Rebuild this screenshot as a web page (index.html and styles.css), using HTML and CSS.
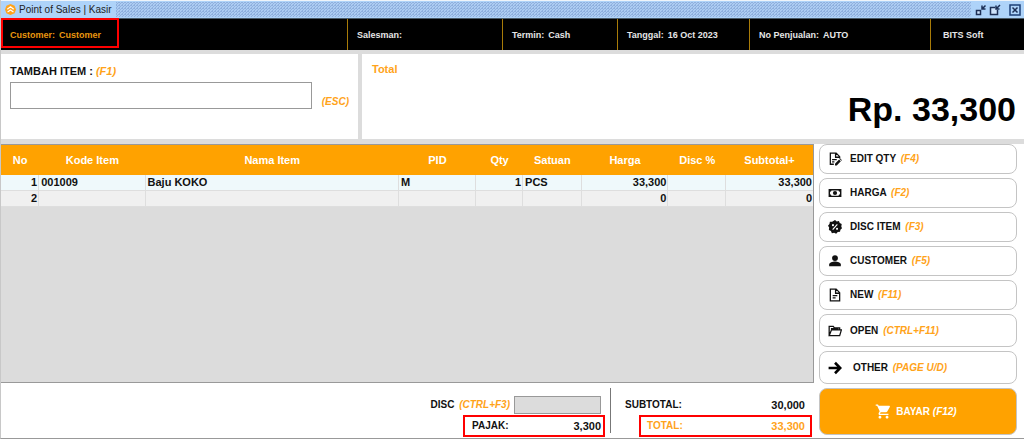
FILE: index.html
```html
<!DOCTYPE html>
<html lang="id">
<head>
<meta charset="utf-8">
<meta name="viewport" content="width=device-width, initial-scale=1">
<title>Point of Sales | Kasir</title>
<link rel="stylesheet" href="styles.css">
</head>
<body>
<div class="app">
  <header class="titlebar">
    <svg class="logo" viewBox="0 0 12 12" aria-hidden="true"><path d="M6 0l4.5 1.800L12 6l-1.500 4.200L6 12l-4.500-1.800L0 6l1.500-4.200z" fill="#ffa31a"/><path d="M2.500 5.800L6 3l3.500 2.800M2.800 8.800L6 6.500l3.200 2.300" fill="none" stroke="#fff" stroke-width="1.300"/></svg>
    <h1 class="title">Point of Sales | Kasir</h1>
    <div class="grip"></div>
    <div class="window-buttons">
      <button class="win" aria-label="Minimize"><svg viewBox="0 0 12 12"><path d="M1.500 6.500h4v4h-4z" class="pane"/><path d="M10.500 1.500L7.500 4.500M7 1.500v3.500h3.500" class="stroke"/></svg></button>
      <button class="win" aria-label="Restore"><svg viewBox="0 0 12 12"><path d="M6 3.500H1.500v7h7V6" class="pane"/><path d="M11 1L7.500 4.500M7 1.500v3.500h3.500" class="stroke"/></svg></button>
      <button class="win win-close" aria-label="Close"><svg viewBox="0 0 12 12"><path d="M1 1h10v10H1z" class="frame"/><path d="M3.500 3.500l5 5M8.500 3.500l-5 5" class="stroke"/></svg></button>
    </div>
  </header>

  <section class="infobar">
    <div class="info info-customer"><span>Customer:</span><span>Customer</span></div>
    <div class="info"><span>Salesman:</span></div>
    <div class="info"><span>Termin:</span><span>Cash</span></div>
    <div class="info"><span>Tanggal:</span><span>16 Oct 2023</span></div>
    <div class="info"><span>No Penjualan:</span><span>AUTO</span></div>
    <div class="info info-brand"><span>BITS Soft</span></div>
  </section>

  <section class="panels">
    <div class="panel entry">
      <label class="entry-label" for="item">TAMBAH ITEM : <em class="key">(F1)</em></label>
      <div class="entry-row">
        <input class="entry-input" id="item" type="text">
        <em class="key">(ESC)</em>
      </div>
    </div>
    <div class="panel grand">
      <h2 class="grand-label">Total</h2>
      <p class="grand-value">Rp. 33,300</p>
    </div>
  </section>

  <main class="main">
    <div class="left">
      <div class="table-box">
        <table class="items">
          <colgroup><col class="c-no"><col class="c-kode"><col class="c-nama"><col class="c-pid"><col class="c-qty"><col class="c-satuan"><col class="c-harga"><col class="c-disc"><col class="c-sub"></colgroup>
          <thead><tr><th>No</th><th>Kode Item</th><th>Nama Item</th><th>PID</th><th>Qty</th><th>Satuan</th><th>Harga</th><th>Disc %</th><th>Subtotal+</th></tr></thead>
          <tbody>
            <tr class="active"><td class="num">1</td><td>001009</td><td>Baju KOKO</td><td>M</td><td class="num">1</td><td>PCS</td><td class="num">33,300</td><td></td><td class="num">33,300</td></tr>
            <tr><td class="num">2</td><td></td><td></td><td></td><td></td><td></td><td class="num">0</td><td></td><td class="num">0</td></tr>
          </tbody>
        </table>
      </div>
      <div class="summary">
        <div class="sums sums-tax">
          <div class="sum"><label class="sum-name" for="disc">DISC <em class="key">(CTRL+F3)</em></label><input class="disc-input" id="disc" type="text"></div>
          <div class="sum marked"><span class="sum-name">PAJAK:</span><span class="sum-value">3,300</span></div>
        </div>
        <div class="sums sums-total">
          <div class="sum"><span class="sum-name">SUBTOTAL:</span><span class="sum-value">30,000</span></div>
          <div class="sum marked accent"><span class="sum-name">TOTAL:</span><span class="sum-value">33,300</span></div>
        </div>
      </div>
    </div>

    <nav class="actions">
      <button class="action"><svg class="icon" viewBox="0 0 24 24"><path d="M10 21H4V2h10l6 6v3M13 2v7h6M7 13h8M7 17h4" class="line"/><path d="M12 23v-3l7-7 3 3-7 7zM20 12l1-1 3 3-1 1z"/></svg><span>EDIT QTY <em class="key">(F4)</em></span></button>
      <button class="action"><svg class="icon" viewBox="0 0 24 24"><path fill-rule="evenodd" d="M1 5h22v14H1zM6 7.500a3 3 0 0 1-2.500 2.500v4A3 3 0 0 1 6 16.500h12a3 3 0 0 1 2.500-2.500v-4A3 3 0 0 1 18 7.500z"/><circle cx="12" cy="12" r="3.600"/></svg><span>HARGA <em class="key">(F2)</em></span></button>
      <button class="action"><svg class="icon" viewBox="0 0 24 24"><path d="M12 0l3 2.500 3.800-.9 1.300 3.700 3.400 1.700L22.800 11 24 14l-2.700 2.500-.7 3.800-3.900.4L14 23.500 10.500 22 6.700 22.500 5 19l-3.500-2L2 13 0 10l2.500-3 .7-3.800 3.900-.4z"/><path d="M8 16.500l8-9" stroke="#fff" stroke-width="2"/><circle cx="8.500" cy="8.800" r="1.800" fill="#fff"/><circle cx="15.500" cy="15.200" r="1.800" fill="#fff"/></svg><span>DISC ITEM <em class="key">(F3)</em></span></button>
      <button class="action"><svg class="icon" viewBox="0 0 24 24"><circle cx="12" cy="7" r="5"/><path d="M2 21v-3c0-3 6-5 10-5s10 2 10 5v3z"/></svg><span>CUSTOMER <em class="key">(F5)</em></span></button>
      <button class="action"><svg class="icon" viewBox="0 0 24 24"><path d="M4 2h10l6 6v14H4zM13 2v7h7M8 13h8M8 17h5" class="line"/></svg><span>NEW <em class="key">(F11)</em></span></button>
      <button class="action tall"><svg class="icon" viewBox="0 0 24 24"><path d="M2 20V4h7l2 2.500h9V10M2 20l4-10h17l-3 10zM5 8h13" class="line"/></svg><span>OPEN <em class="key">(CTRL+F11)</em></span></button>
      <button class="action tall"><svg class="icon" viewBox="0 0 24 24"><path d="M1 12h19M12 3l9 9-9 9" fill="none" stroke="#000" stroke-width="4.500"/></svg><span class="other">OTHER <em class="key">(PAGE U/D)</em></span></button>
      <button class="action pay"><svg class="cart" viewBox="0 0 24 24"><path d="M7 18c-1.100 0-1.990.9-1.990 2S5.900 22 7 22s2-.9 2-2-.9-2-2-2zM1 2v2h2l3.600 7.590-1.350 2.450C4.520 15.370 5.480 17 7 17h12v-2H7.420c-.14 0-.25-.11-.25-.25l.03-.12.900-1.630h7.450c.75 0 1.410-.41 1.750-1.030l3.580-6.490A1 1 0 0 0 20 4H5.210l-.94-2H1zm16 16c-1.100 0-1.990.9-1.990 2s.89 2 1.990 2 2-.9 2-2-.9-2-2-2z"/></svg><span>BAYAR <em>(F12)</em></span></button>
    </nav>
  </main>
</div>
</body>
</html>
```
FILE: styles.css
```css
*, *::before { box-sizing: border-box; }

body {
  margin: 0;
  background: #fff;
  color: #111;
  font: bold 11px/14px "Liberation Sans", Arial, sans-serif;
}

h1, h2, p { margin: 0; }
button, input { font: inherit; color: inherit; }

.app {
  display: flex;
  flex-direction: column;
  min-height: 100vh;
  border-left: 1px solid #c8c8c8;
  border-bottom: 1px solid #999;
}

.key { margin-left: 2px; color: #ffa31a; }

/* Title bar */
.titlebar {
  display: flex;
  align-items: center;
  height: 19px;
  padding: 0 2px 0 4px;
  border-top: 1px solid #eef4fa;
  border-bottom: 1px solid #4a5a68;
  background: #aed3f9;
}
.logo { width: 11px; height: 11px; }
.title { margin: 0 4px 0 3px; font-size: 10px; font-weight: normal; color: #222; }
.grip {
  flex: 1;
  height: 15px;
  background-color: #acccf2;
  background-image:
    linear-gradient(135deg, #8fb0de 25%, transparent 25%, transparent 50%, #8fb0de 50%, #8fb0de 60%, transparent 60%),
    linear-gradient(45deg, #c6e0fc 25%, transparent 25%);
  background-size: 3px 3px;
}
.window-buttons { display: flex; align-items: center; padding-left: 3px; }
.win { width: 14px; height: 14px; padding: 1px; border: 0; background: none; }
.win svg { display: block; width: 12px; height: 12px; }
.win-close { margin-left: 6px; }
.pane { fill: #cfe4fc; stroke: #1d2f55; stroke-width: 1.5; }
.frame { fill: none; stroke: #1d3f75; stroke-width: 1.5; }
.stroke { fill: none; stroke: #1d2f55; stroke-width: 1.5; }

/* Transaction details */
.infobar {
  display: grid;
  grid-template-columns: 347fr 155fr 115fr 132fr 181fr 93fr;
  height: 31px;
  background: #000;
  color: #e6e6e6;
  font-size: 9px;
}
.info {
  display: flex;
  align-items: center;
  gap: 4px;
  padding-left: 9px;
  border-right: 1px solid #a87b08;
  white-space: nowrap;
}
.info-brand { padding-left: 12px; border-right: 0; }
.info-customer { position: relative; color: #e8970f; }
.info-customer::before {
  content: "";
  position: absolute;
  top: -1px;
  left: 0;
  width: 118px;
  height: 30px;
  border: 2px solid #f00;
}

/* Item entry and grand total */
.panels {
  display: grid;
  grid-template-columns: 357fr 662fr;
  gap: 4px;
  padding: 4px 0 5px;
  background: #dcdcdc;
}
.panel { height: 85px; background: #fff; }
.entry { padding: 10px 9px; }
.entry-label { display: block; font-size: 11px; }
.entry-label .key { margin-left: 0; }
.entry-row { display: flex; align-items: flex-end; gap: 8px; margin-top: 4px; font-size: 10px; }
.entry-input {
  flex: 1;
  min-width: 0;
  height: 27px;
  border: 1px solid #999;
  background: #fff;
}
.grand { padding: 8px 8px 8px 10px; }
.grand-label { font-size: 11px; line-height: 14px; color: #ffa31a; }
.grand-value { margin-top: 13px; font-size: 34px; line-height: 40px; text-align: right; color: #000; }

/* Work area */
.main { display: flex; flex: 1; }
.left { display: flex; flex: 1; flex-direction: column; min-width: 0; }
.table-box {
  flex: 1;
  border: 1px solid #999;
  border-left: 0;
  background: #dcdcdc;
}
.items { width: 100%; border-collapse: separate; border-spacing: 0; table-layout: fixed; }
.items th { height: 30px; padding: 0; background: #ffa200; color: #fff; }
.items td {
  height: 16px;
  padding: 0 2px;
  border-right: 1px solid #dedede;
  border-bottom: 1px solid #dedede;
  background: #f0f0f0;
  line-height: 15px;
  white-space: nowrap;
}
.items td:last-child { border-right: 0; }
.items .active td { background: #eff9fb; }
.items .num { padding-right: 1px; text-align: right; }
.c-no { width: 4.7%; }
.c-kode { width: 13.1%; }
.c-nama { width: 31.2%; }
.c-pid { width: 9.5%; }
.c-qty { width: 5.8%; }
.c-satuan { width: 7.2%; }
.c-harga { width: 10.7%; }
.c-disc { width: 7.1%; }
.c-sub { width: 10.7%; }

/* Sums below the table */
.summary { display: flex; justify-content: flex-end; padding: 4px 2px 1px 0; }
.sums { display: flex; flex-direction: column; align-items: flex-end; }
.sums-tax { padding-right: 5px; }
.sums-total { position: relative; width: 202px; }
.sums-total::before {
  content: "";
  position: absolute;
  top: 1px;
  left: 0;
  width: 1px;
  height: 45px;
  background: #777;
}
.sum { display: flex; align-items: center; justify-content: space-between; height: 28px; }
.sum-name { font-size: 10px; }
.disc-input {
  width: 87px;
  height: 18px;
  margin: 8px 4px 0;
  border: 1px solid #999;
  background: #dcdcdc;
}
.sums-tax .sum-name { white-space: nowrap; }
.sums-tax label { padding-top: 8px; }
.sums-total .sum { width: 187px; padding: 8px 7px 0 0; }
.marked, .sums-total .marked {
  width: 142px;
  height: 22px;
  padding: 0 2px 0 7px;
  border: 2px solid #f00;
}
.sums-total .marked { width: 173px; padding: 0 5px 0 6px; }
.accent { color: #ffa31a; }

/* Action buttons */
.actions {
  display: flex;
  flex-direction: column;
  gap: 4px;
  width: 210px;
  padding: 0 7px 3px 5px;
}
.action {
  display: flex;
  align-items: center;
  gap: 8px;
  height: 30px;
  padding: 0 0 0 8px;
  border: 1px solid #c4c4c4;
  border-radius: 8px;
  background: #fff;
  font-size: 10px;
}
.tall { height: 33px; }
.icon { width: 14px; height: 14px; fill: #111; }
.line { fill: none; stroke: #111; stroke-width: 2.2; }
.other { padding-left: 3px; }
.pay {
  justify-content: center;
  gap: 4px;
  height: 47px;
  padding: 0 4px 0 0;
  background: #ffa200;
  color: #fff;
}
.cart { width: 17px; height: 17px; fill: #fff; }
```
